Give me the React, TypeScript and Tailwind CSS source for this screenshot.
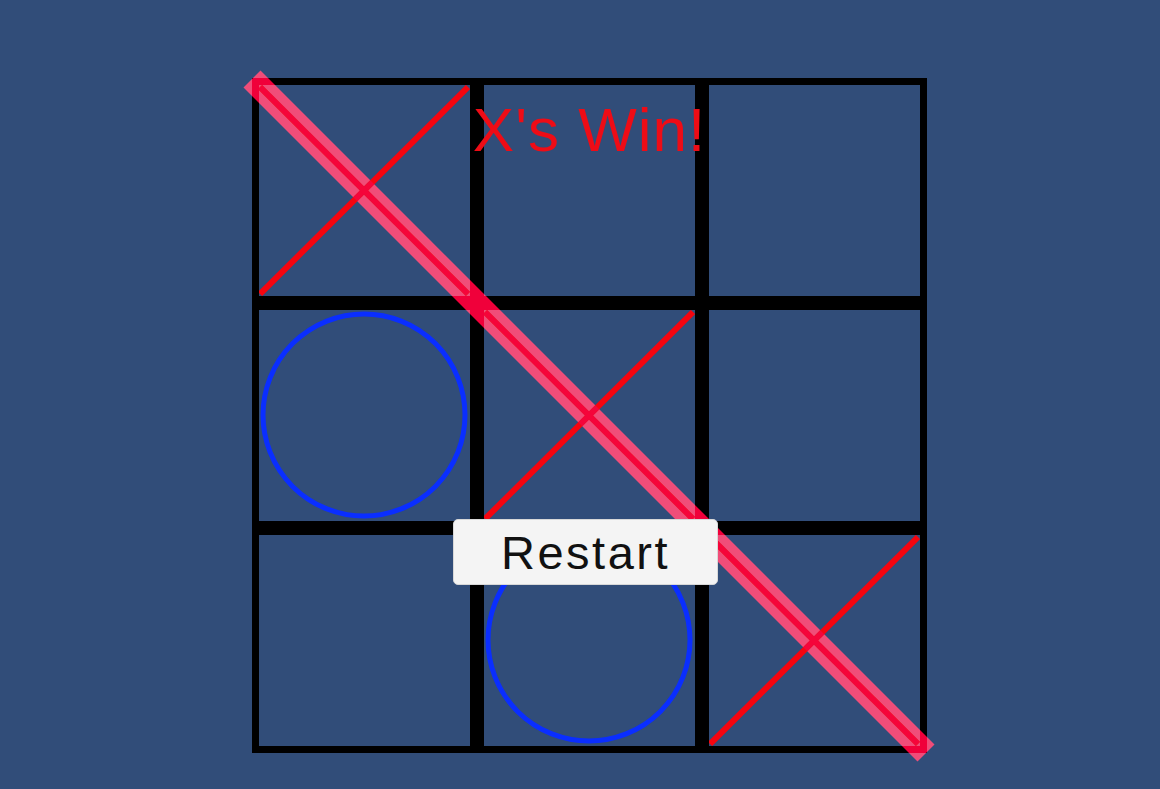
import type { ReactNode } from "react";

type Mark = "X" | "O" | null;

const board: Mark[] = ["X", null, null, "O", "X", null, null, "O", "X"];

// cell interior is 211px (225 minus the 7px border on each side)
function XMark() {
  return (
    <svg width="211" height="211" viewBox="0 0 211 211" className="block">
      <line x1="1" y1="209" x2="209" y2="2" stroke="#f5050f" strokeWidth="6" />
      <line x1="1" y1="2" x2="209" y2="209" stroke="#f5050f" strokeWidth="6" />
    </svg>
  );
}

function OMark() {
  return (
    <svg width="211" height="211" viewBox="0 0 211 211" className="block">
      <circle cx="105" cy="105" r="101" fill="none" stroke="#0a2eff" strokeWidth="5" />
    </svg>
  );
}

function Cell({ children }: { children?: ReactNode }) {
  return <div className="h-[225px] w-[225px] border-[7px] border-black">{children}</div>;
}

export default function App() {
  return (
    <div className="min-h-screen w-full bg-[#314d79] pl-[252px] pt-[78px] font-['Liberation_Sans',Arial,sans-serif]">
      <div className="relative w-[675px]">
        <div className="grid grid-cols-3">
          {board.map((m, i) => (
            <Cell key={i}>{m === "X" ? <XMark /> : m === "O" ? <OMark /> : null}</Cell>
          ))}
        </div>

        {/* winning stroke across the diagonal */}
        <svg
          width="675"
          height="675"
          viewBox="0 0 675 675"
          className="pointer-events-none absolute left-0 top-0 overflow-visible mix-blend-lighten"
        >
          <line x1="0" y1="1" x2="674" y2="675" stroke="#f0003a" strokeWidth="24" />
        </svg>

        <p className="absolute inset-x-0 top-[21px] text-center text-[62px] leading-none tracking-[1px] text-[#ee0c16]">
          X's Win!
        </p>

        <button className="absolute left-[201px] top-[441px] flex h-[66px] w-[265px] items-center justify-center rounded-[5px] border border-[#d8d8d8] bg-[#f4f4f4] text-[47px] leading-none tracking-[2.5px] text-[#111]">
          Restart
        </button>
      </div>
    </div>
  );
}
